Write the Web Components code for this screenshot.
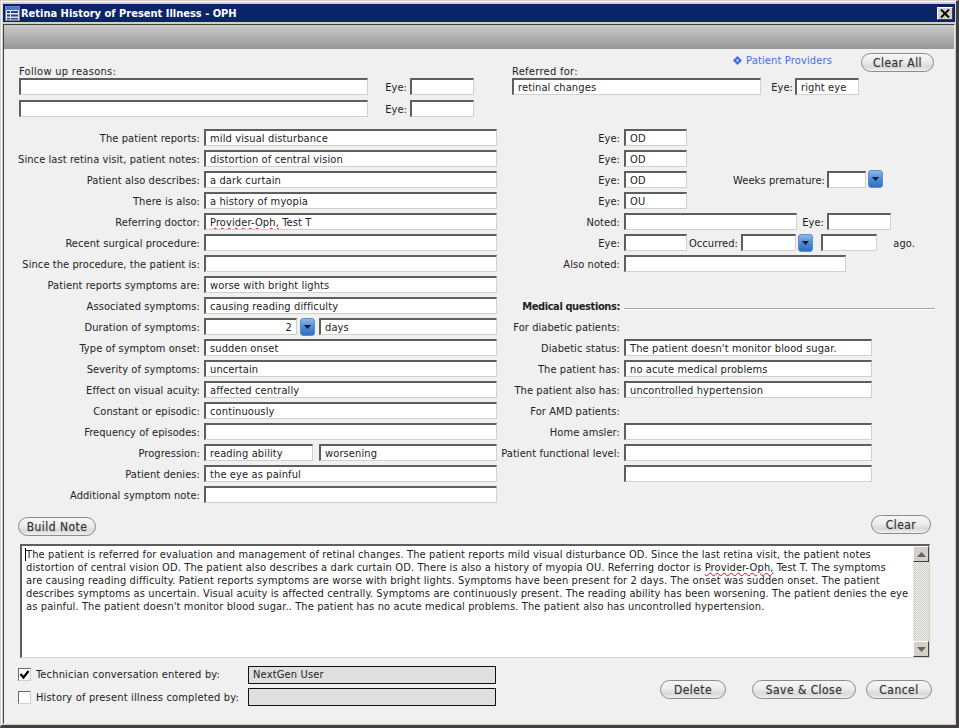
<!DOCTYPE html>
<html>
<head>
<meta charset="utf-8">
<title>Retina History of Present Illness - OPH</title>
<style>
    html, body { margin: 0; padding: 0; background: #d4d0c8; }
    body { font: 11px "DejaVu Sans", "Liberation Sans", sans-serif; font-stretch: condensed; letter-spacing: 0.12px; color: #222; }
    .squiggle { text-decoration: underline wavy #d01010 1px; text-underline-offset: 1px; }
    .caret { box-shadow: -1px 0 0 #000; }
</style>
</head>
<body>
<retina-window heading="Retina History of Present Illness - OPH">
    <hpi-top>
        <hpi-row slot="left" plain>Follow up reasons:</hpi-row>
        <hpi-row slot="left" first>
            <hpi-field w="349"></hpi-field>
            <hpi-label w="39">Eye:</hpi-label><hpi-field w="64" style="margin-left:3px"></hpi-field>
        </hpi-row>
        <hpi-row slot="left" first>
            <hpi-field w="349"></hpi-field>
            <hpi-label w="39">Eye:</hpi-label><hpi-field w="64" style="margin-left:3px"></hpi-field>
        </hpi-row>
        <hpi-link slot="link">Patient Providers</hpi-link>
        <pill-button slot="clear" w="73">Clear All</pill-button>
        <hpi-row slot="right" plain>Referred for:</hpi-row>
        <hpi-row slot="right" first>
            <hpi-field w="249">retinal changes</hpi-field>
            <hpi-label w="32">Eye:</hpi-label><hpi-field w="64" style="margin-left:2px">right eye</hpi-field>
        </hpi-row>
    </hpi-top>

    <hpi-columns>
        <hpi-column slot="left" label-w="196">
            <hpi-row label="The patient reports:"><hpi-field w="293">mild visual disturbance</hpi-field></hpi-row>
            <hpi-row label="Since last retina visit, patient notes:"><hpi-field w="293">distortion of central vision</hpi-field></hpi-row>
            <hpi-row label="Patient also describes:"><hpi-field w="293">a dark curtain</hpi-field></hpi-row>
            <hpi-row label="There is also:"><hpi-field w="293">a history of myopia</hpi-field></hpi-row>
            <hpi-row label="Referring doctor:"><hpi-field w="293"><span class="squiggle">Provider-Oph,</span> Test T</hpi-field></hpi-row>
            <hpi-row label="Recent surgical procedure:"><hpi-field w="293"></hpi-field></hpi-row>
            <hpi-row label="Since the procedure, the patient is:"><hpi-field w="293"></hpi-field></hpi-row>
            <hpi-row label="Patient reports symptoms are:"><hpi-field w="293">worse with bright lights</hpi-field></hpi-row>
            <hpi-row label="Associated symptoms:"><hpi-field w="293">causing reading difficulty</hpi-field></hpi-row>
            <hpi-row label="Duration of symptoms:">
                <hpi-field w="93" align="right">2</hpi-field>
                <spin-button style="margin-left:3px"></spin-button>
                <hpi-field w="178" style="margin-left:4px">days</hpi-field>
            </hpi-row>
            <hpi-row label="Type of symptom onset:"><hpi-field w="293">sudden onset</hpi-field></hpi-row>
            <hpi-row label="Severity of symptoms:"><hpi-field w="293">uncertain</hpi-field></hpi-row>
            <hpi-row label="Effect on visual acuity:"><hpi-field w="293">affected centrally</hpi-field></hpi-row>
            <hpi-row label="Constant or episodic:"><hpi-field w="293">continuously</hpi-field></hpi-row>
            <hpi-row label="Frequency of episodes:"><hpi-field w="293"></hpi-field></hpi-row>
            <hpi-row label="Progression:">
                <hpi-field w="109">reading ability</hpi-field>
                <hpi-field w="178" style="margin-left:6px">worsening</hpi-field>
            </hpi-row>
            <hpi-row label="Patient denies:"><hpi-field w="293">the eye as painful</hpi-field></hpi-row>
            <hpi-row label="Additional symptom note:"><hpi-field w="293"></hpi-field></hpi-row>
        </hpi-column>

        <hpi-column slot="right" label-w="120">
            <hpi-row label="Eye:"><hpi-field w="63">OD</hpi-field></hpi-row>
            <hpi-row label="Eye:"><hpi-field w="63">OD</hpi-field></hpi-row>
            <hpi-row label="Eye:">
                <hpi-field w="63">OD</hpi-field>
                <hpi-label w="138">Weeks premature:</hpi-label>
                <hpi-field w="39" style="margin-left:2px"></hpi-field>
                <spin-button style="margin-left:2px;margin-top:-1px"></spin-button>
            </hpi-row>
            <hpi-row label="Eye:"><hpi-field w="63">OU</hpi-field></hpi-row>
            <hpi-row label="Noted:">
                <hpi-field w="173"></hpi-field>
                <hpi-label w="27">Eye:</hpi-label>
                <hpi-field w="64" style="margin-left:3px"></hpi-field>
            </hpi-row>
            <hpi-row label="Eye:">
                <hpi-field w="63"></hpi-field>
                <hpi-label w="51">Occurred:</hpi-label>
                <hpi-field w="55" style="margin-left:3px"></hpi-field>
                <spin-button style="margin-left:2px"></spin-button>
                <hpi-field w="56" style="margin-left:8px"></hpi-field>
                <hpi-label w="38">ago.</hpi-label>
            </hpi-row>
            <hpi-row label="Also noted:"><hpi-field w="222"></hpi-field></hpi-row>
            <hpi-row></hpi-row>
            <hpi-row label="Medical questions:" strong><hpi-rule></hpi-rule></hpi-row>
            <hpi-row label="For diabetic patients:"></hpi-row>
            <hpi-row label="Diabetic status:"><hpi-field w="248">The patient doesn't monitor blood sugar.</hpi-field></hpi-row>
            <hpi-row label="The patient has:"><hpi-field w="248">no acute medical problems</hpi-field></hpi-row>
            <hpi-row label="The patient also has:"><hpi-field w="248">uncontrolled hypertension</hpi-field></hpi-row>
            <hpi-row label="For AMD patients:"></hpi-row>
            <hpi-row label="Home amsler:"><hpi-field w="248"></hpi-field></hpi-row>
            <hpi-row label="Patient functional level:"><hpi-field w="248"></hpi-field></hpi-row>
            <hpi-row label=" "><hpi-field w="248"></hpi-field></hpi-row>
        </hpi-column>
    </hpi-columns>

    <hpi-note-bar>
        <pill-button slot="build" w="78">Build Note</pill-button>
        <pill-button slot="clear" w="60">Clear</pill-button>
    </hpi-note-bar>

    <note-box>
        <div class="caret">The patient is referred for evaluation and management of retinal changes. The patient reports mild visual disturbance OD. Since the last retina visit, the patient notes</div>
        <div>distortion of central vision OD. The patient also describes a dark curtain OD. There is also a history of myopia OU. Referring doctor is <span class="squiggle">Provider-Oph,</span> Test T. The symptoms</div>
        <div>are causing reading difficulty. Patient reports symptoms are worse with bright lights. Symptoms have been present for 2 days. The onset was sudden onset. The patient</div>
        <div>describes symptoms as uncertain. Visual acuity is affected centrally. Symptoms are continuously present. The reading ability has been worsening. The patient denies the eye</div>
        <div>as painful. The patient doesn't monitor blood sugar.. The patient has no acute medical problems. The patient also has uncontrolled hypertension.</div>
    </note-box>

    <hpi-footer>
        <check-row slot="checks" checked value="NextGen User">Technician conversation entered by:</check-row>
        <check-row slot="checks" value="">History of present illness completed by:</check-row>
        <pill-button slot="actions" w="66">Delete</pill-button>
        <pill-button slot="actions" w="104" style="margin-left:26px">Save &amp; Close</pill-button>
        <pill-button slot="actions" w="66" style="margin-left:10px">Cancel</pill-button>
    </hpi-footer>
</retina-window>

<script>
// Little helper so each element below only has to give its markup
const shadow = (el, html) => {
    el.attachShadow({ mode: 'open' });
    el.shadowRoot.innerHTML = html;
};

class RetinaWindow extends HTMLElement {
    constructor() {
        super();
        shadow(this, `
            <style>
                :host {
                    display: flex;
                    flex-direction: column;
                    box-sizing: border-box;
                    width: 959px;
                    height: 728px;
                    background: #d4d0c8;
                    border-top: 1px solid #d4d0c8;
                    border-left: 1px solid #d4d0c8;
                    border-right: 3px solid #404040;
                    border-bottom: 3px solid #404040;
                    box-shadow: inset 1px 1px 0 #fff;
                    padding: 3px 1px 1px 2px;
                }
                .title {
                    display: flex;
                    align-items: center;
                    height: 18px;
                    flex: none;
                    background: #0a246a;
                    color: #fff;
                    font-weight: bold;
                    letter-spacing: 0;
                    padding: 0 2px;
                }
                .title svg { flex: none; margin-right: 1px; }
                .title span { flex: 1; }
                .close {
                    width: 16px;
                    height: 13px;
                    box-sizing: border-box;
                    background: #d4d0c8;
                    border: 1px solid;
                    border-color: #fff #404040 #404040 #fff;
                    display: flex;
                    align-items: center;
                    justify-content: center;
                }
                .panel {
                    flex: 1;
                    margin-top: 2px;
                    display: flex;
                    flex-direction: column;
                    border-top: 1px solid #404040;
                    border-left: 1px solid #404040;
                    border-right: 1px solid #ece9d8;
                    border-bottom: 1px solid #ece9d8;
                    background: #f0f0f0;
                    min-height: 0;
                }
                .band {
                    height: 24px;
                    flex: none;
                    background: linear-gradient(#cbcbcb, #979797);
                }
            </style>
            <div class="title">
                <svg width="15" height="15" viewBox="0 0 15 15">
                    <rect x="0.5" y="0.5" width="14" height="14" fill="#dfe6f5" stroke="#6f7fa8"/>
                    <rect x="1" y="1" width="13" height="3" fill="#4a6fe0"/>
                    <path d="M2 5h3v2H2zM2 8.500h3v2H2zM2 12h3v1.500H2zM6 5h7v2H6zM6 8.500h7v2H6zM6 12h7v1.500H6z" fill="#33415f"/>
                </svg>
                <span>${this.getAttribute('heading')}</span>
                <div class="close">
                    <svg width="10" height="9" viewBox="0 0 10 9"><path d="M1 0.500L9 8.500M9 0.500L1 8.500" stroke="#000" stroke-width="2" fill="none"/></svg>
                </div>
            </div>
            <div class="panel">
                <div class="band"></div>
                <slot></slot>
            </div>
        `);
    }
}

class HpiTop extends HTMLElement {
    constructor() {
        super();
        shadow(this, `
            <style>
                :host {
                    display: grid;
                    grid-template-columns: 493px 1fr;
                    height: 80px;
                    flex: none;
                    box-sizing: border-box;
                    padding: 4px 0 0 15px;
                }
                .left { padding-top: 12px; }
                .head {
                    display: flex;
                    justify-content: flex-end;
                    align-items: flex-start;
                    height: 12px;
                    padding-right: 20px;
                }
                ::slotted([slot="clear"]) { margin-left: 29px; }
            </style>
            <div class="left"><slot name="left"></slot></div>
            <div>
                <div class="head"><slot name="link"></slot><slot name="clear"></slot></div>
                <slot name="right"></slot>
            </div>
        `);
    }
}

class HpiColumns extends HTMLElement {
    constructor() {
        super();
        shadow(this, `
            <style>
                :host { display: grid; grid-template-columns: 496px 1fr; flex: none; }
            </style>
            <slot name="left"></slot>
            <slot name="right"></slot>
        `);
    }
}

class HpiColumn extends HTMLElement {
    constructor() {
        super();
        shadow(this, `
            <style>:host { display: block; --label-w: ${this.getAttribute('label-w')}px; }</style>
            <slot></slot>
        `);
    }
}

class HpiRow extends HTMLElement {
    constructor() {
        super();
        const label = this.getAttribute('label');
        const plain = this.hasAttribute('plain');
        const first = this.hasAttribute('first');
        const strong = this.hasAttribute('strong');
        shadow(this, `
            <style>
                :host { display: flex; align-items: flex-start; height: ${plain ? 13 : first ? 22 : 21}px; }
                .label {
                    flex: none;
                    width: var(--label-w, 100px);
                    margin-right: 4px;
                    text-align: right;
                    line-height: 17px;
                    padding-top: 1px;
                    white-space: nowrap;
                    letter-spacing: ${strong ? '-0.4px' : '0.08px'};
                    ${strong ? 'font-weight: bold;' : ''}
                }
                .plain { line-height: 13px; white-space: nowrap; letter-spacing: 0.3px; }
            </style>
            ${label !== null ? `<span class="label">${label}</span>` : ''}
            ${plain ? '<div class="plain"><slot></slot></div>' : '<slot></slot>'}
        `);
    }
}

class HpiField extends HTMLElement {
    constructor() {
        super();
        const align = this.getAttribute('align') || 'left';
        shadow(this, `
            <style>
                :host {
                    display: block;
                    flex: none;
                    box-sizing: border-box;
                    width: ${this.getAttribute('w')}px;
                    height: 17px;
                    background: #fff;
                    border-top: 2px solid #5e5e5e;
                    border-left: 2px solid #5e5e5e;
                    border-right: 1px solid #d4d0c8;
                    border-bottom: 1px solid #d4d0c8;
                    padding: 0 4px;
                    line-height: 16px;
                    text-align: ${align};
                    white-space: nowrap;
                    overflow: hidden;
                }
            </style>
            <slot></slot>
        `);
    }
}

class HpiLabel extends HTMLElement {
    constructor() {
        super();
        shadow(this, `
            <style>
                :host {
                    display: block;
                    flex: none;
                    box-sizing: border-box;
                    width: ${this.getAttribute('w')}px;
                    text-align: right;
                    line-height: 17px;
                    padding-top: 1px;
                    letter-spacing: 0.08px;
                    white-space: nowrap;
                }
            </style>
            <slot></slot>
        `);
    }
}

class HpiLink extends HTMLElement {
    constructor() {
        super();
        shadow(this, `
            <style>
                :host { display: flex; align-items: center; gap: 4px; color: #3f6fe8; letter-spacing: 0.15px; line-height: 13px; padding-top: 1px; white-space: nowrap; }
            </style>
            <svg width="9" height="9" viewBox="0 0 9 9">
                <path d="M4.500 0L9 4.500L4.500 9L0 4.500Z" fill="#3f6fe8"/>
                <rect x="3.500" y="3.500" width="2" height="2" fill="#dfe8ff"/>
            </svg>
            <span><slot></slot></span>
        `);
    }
}

class PillButton extends HTMLElement {
    constructor() {
        super();
        shadow(this, `
            <style>
                :host {
                    display: flex;
                    flex: none;
                    align-items: center;
                    justify-content: center;
                    box-sizing: border-box;
                    width: ${this.getAttribute('w')}px;
                    height: 19px;
                    border: 1px solid #8c8c8c;
                    border-radius: 10px;
                    background: linear-gradient(#f6f6f6, #ececec 45%, #d9d9d9 75%, #f0f0f0);
                    font-size: 12px;
                    letter-spacing: 0.45px;
                    text-shadow: 0 0 1px rgba(0, 0, 0, 0.3);
                    color: #333;
                    white-space: nowrap;
                }
            </style>
            <slot></slot>
        `);
    }
}

class SpinButton extends HTMLElement {
    constructor() {
        super();
        shadow(this, `
            <style>
                :host {
                    display: flex;
                    flex: none;
                    align-items: center;
                    justify-content: center;
                    box-sizing: border-box;
                    width: 15px;
                    height: 18px;
                    border: 1px solid #5f8fc8;
                    border-radius: 3px;
                    background: linear-gradient(#8fb8ea, #4f8ad4 50%, #2f6fc0);
                }
            </style>
            <svg width="7" height="4" viewBox="0 0 7 4"><path d="M0 0H7L3.500 4Z" fill="#0c1a30"/></svg>
        `);
    }
}

class HpiRule extends HTMLElement {
    constructor() {
        super();
        shadow(this, `
            <style>
                :host {
                    display: block;
                    flex: none;
                    width: 311px;
                    height: 1px;
                    margin-top: 11px;
                    background: #a6a6a6;
                    border-bottom: 1px solid #fff;
                }
            </style>
        `);
    }
}

class HpiNoteBar extends HTMLElement {
    constructor() {
        super();
        shadow(this, `
            <style>
                :host {
                    display: flex;
                    justify-content: space-between;
                    align-items: flex-start;
                    flex: none;
                    height: 29px;
                    margin-top: 8px;
                    padding: 0 23px 0 14px;
                }
                ::slotted([slot="build"]) { margin-top: 2px; }
            </style>
            <slot name="build"></slot>
            <slot name="clear"></slot>
        `);
    }
}

class NoteBox extends HTMLElement {
    constructor() {
        super();
        shadow(this, `
            <style>
                :host {
                    display: flex;
                    flex: none;
                    box-sizing: border-box;
                    width: 910px;
                    height: 114px;
                    margin-left: 16px;
                    background: #fff;
                    border-top: 2px solid #5e5e5e;
                    border-left: 2px solid #5e5e5e;
                    border-right: 1px solid #d4d0c8;
                    border-bottom: 1px solid #d4d0c8;
                }
                .text {
                    flex: 1;
                    padding: 2px 0 0 4px;
                    line-height: 13px;
                    white-space: nowrap;
                    overflow: hidden;
                }
                .bar {
                    flex: none;
                    width: 16px;
                    display: flex;
                    flex-direction: column;
                    justify-content: space-between;
                    background-color: #f4f4f0;
                    background-image: conic-gradient(#c8c8c0 25%, transparent 0 50%, #c8c8c0 0 75%, transparent 0);
                    background-size: 2px 2px;
                }
                .arrow {
                    height: 16px;
                    box-sizing: border-box;
                    background: #d4d0c8;
                    border: 1px solid;
                    border-color: #fff #404040 #404040 #fff;
                    display: flex;
                    align-items: center;
                    justify-content: center;
                }
            </style>
            <div class="text"><slot></slot></div>
            <div class="bar">
                <div class="arrow"><svg width="9" height="5" viewBox="0 0 9 5"><path d="M4.500 0L9 5H0Z" fill="#666"/></svg></div>
                <div class="arrow"><svg width="9" height="5" viewBox="0 0 9 5"><path d="M0 0H9L4.500 5Z" fill="#666"/></svg></div>
            </div>
        `);
    }
}

class HpiFooter extends HTMLElement {
    constructor() {
        super();
        shadow(this, `
            <style>
                :host { display: flex; flex: none; margin-top: 8px; padding-left: 14px; }
                .checks { width: 642px; flex: none; }
                .actions { display: flex; padding-top: 14px; align-items: flex-start; }
            </style>
            <div class="checks"><slot name="checks"></slot></div>
            <div class="actions"><slot name="actions"></slot></div>
        `);
    }
}

class CheckRow extends HTMLElement {
    constructor() {
        super();
        const checked = this.hasAttribute('checked');
        const mark = checked
            ? '<svg width="11" height="11" viewBox="0 0 11 11"><path d="M1.500 5L4.500 8.500L9.500 2" stroke="#000" stroke-width="2.200" fill="none"/></svg>'
            : '';
        shadow(this, `
            <style>
                :host { display: flex; align-items: center; height: 18px; margin-bottom: 4px; white-space: nowrap; letter-spacing: 0.17px; }
                .box {
                    width: 13px;
                    height: 13px;
                    flex: none;
                    box-sizing: border-box;
                    background: #fff;
                    border: 1px solid;
                    border-color: #6a6a6a #d4d0c8 #d4d0c8 #6a6a6a;
                    display: flex;
                    align-items: center;
                    justify-content: center;
                    ${checked ? 'margin-bottom: 2px;' : ''}
                }
                .text { width: 212px; margin-left: 5px; flex: none; ${checked ? 'margin-bottom: 2px;' : ''} }
                .who {
                    width: 248px;
                    height: 18px;
                    flex: none;
                    box-sizing: border-box;
                    border: 1px solid #111;
                    background: #dfdfdf;
                    padding: 0 4px;
                    line-height: 16px;
                }
            </style>
            <div class="box">${mark}</div>
            <div class="text"><slot></slot></div>
            <div class="who">${this.getAttribute('value')}</div>
        `);
    }
}

customElements.define('retina-window', RetinaWindow);
customElements.define('hpi-top', HpiTop);
customElements.define('hpi-columns', HpiColumns);
customElements.define('hpi-column', HpiColumn);
customElements.define('hpi-row', HpiRow);
customElements.define('hpi-field', HpiField);
customElements.define('hpi-label', HpiLabel);
customElements.define('hpi-link', HpiLink);
customElements.define('pill-button', PillButton);
customElements.define('spin-button', SpinButton);
customElements.define('hpi-rule', HpiRule);
customElements.define('hpi-note-bar', HpiNoteBar);
customElements.define('note-box', NoteBox);
customElements.define('hpi-footer', HpiFooter);
customElements.define('check-row', CheckRow);
</script>
</body>
</html>
